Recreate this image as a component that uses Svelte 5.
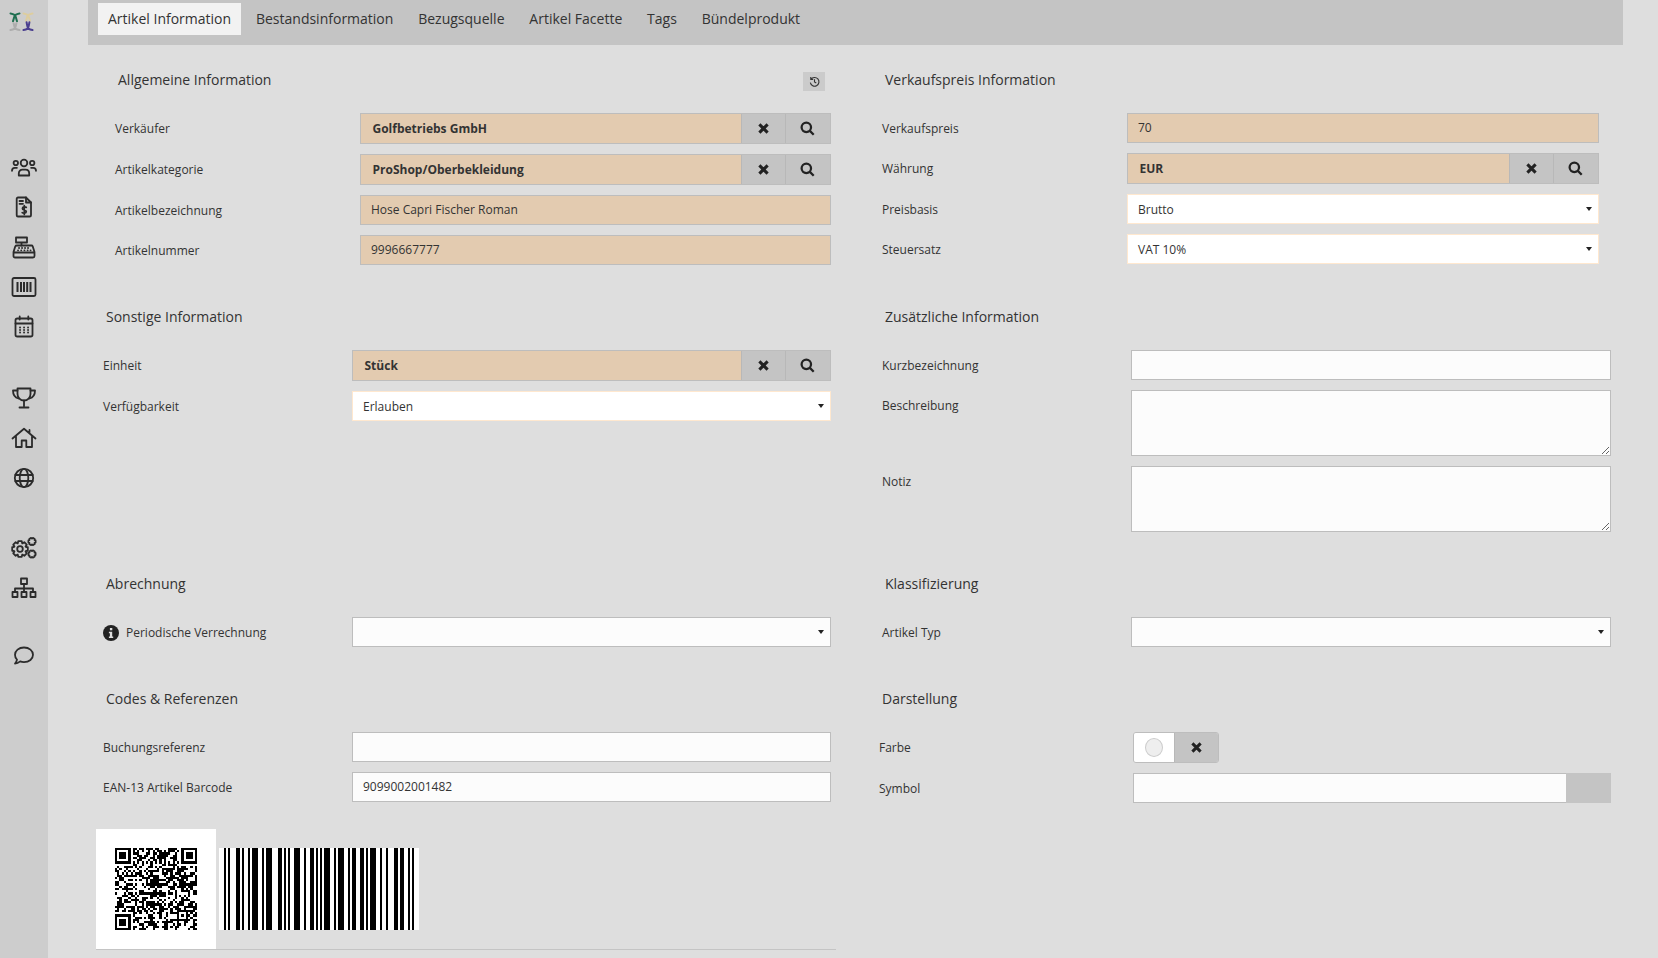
<script>
  const tabs = ['Artikel Information', 'Bestandsinformation', 'Bezugsquelle', 'Artikel Facette', 'Tags', 'Bündelprodukt'];

  // EAN-13 bars for the article barcode
  const L = ['0001101', '0011001', '0010011', '0111101', '0100011', '0110001', '0101111', '0111011', '0110111', '0001011'];
  const PARITY = ['LLLLLL', 'LLGLGG', 'LLGGLG', 'LLGGGL', 'LGLLGG', 'LGGLLG', 'LGGGLL', 'LGLGLG', 'LGLGGL', 'LGGLGL'];
  const invert = (s) => s.replace(/./g, (c) => (c === '0' ? '1' : '0'));

  function ean13(code) {
    const d = code.split('').map(Number);
    let out = '101';
    for (let i = 1; i < 7; i++) {
      const r = invert(L[d[i]]);
      out += PARITY[d[0]][i - 1] === 'L' ? L[d[i]] : r.split('').reverse().join('');
    }
    out += '01010';
    for (let i = 7; i < 13; i++) out += invert(L[d[i]]);
    return out + '101';
  }
  const bars = ean13('9099002001482').split('');

  // QR matrix: fixed patterns, the data area is filled from a small generator
  const SIZE = 37;
  function buildQr() {
    let seed = 90990020;
    const next = () => {
      seed = (seed * 1664525 + 1013904223) % 4294967296;
      return seed / 4294967296;
    };
    const cells = [];
    const finder = (x, y) => {
      if (x < 0 || y < 0 || x > 6 || y > 6) return false;
      return x === 0 || y === 0 || x === 6 || y === 6 || (x > 1 && x < 5 && y > 1 && y < 5);
    };
    for (let y = 0; y < SIZE; y++) {
      for (let x = 0; x < SIZE; x++) {
        let on;
        const tl = x < 8 && y < 8;
        const tr = x >= SIZE - 8 && y < 8;
        const bl = x < 8 && y >= SIZE - 8;
        if (tl) on = finder(x, y);
        else if (tr) on = finder(x - SIZE + 7, y);
        else if (bl) on = finder(x, y - SIZE + 7);
        else if (x === 6) on = y % 2 === 0;
        else if (y === 6) on = x % 2 === 0;
        else if (x >= 28 && x <= 32 && y >= 28 && y <= 32) {
          on = x === 28 || x === 32 || y === 28 || y === 32 || (x === 30 && y === 30);
        } else on = next() > 0.5;
        if (on) cells.push([x, y]);
      }
    }
    return cells;
  }
  const qr = buildQr();

  function gear(cx, cy, r, teeth) {
    let d = '';
    const step = (Math.PI * 2) / teeth;
    for (let i = 0; i < teeth; i++) {
      const a = i * step - step / 2;
      const pts = [
        [r * 0.76, a + step * 0.02],
        [r, a + step * 0.22],
        [r, a + step * 0.78],
        [r * 0.76, a + step * 0.98]
      ];
      pts.forEach(([rad, ang], j) => {
        const x = (cx + rad * Math.cos(ang)).toFixed(2);
        const y = (cy + rad * Math.sin(ang)).toFixed(2);
        d += (i === 0 && j === 0 ? 'M' : 'L') + x + ' ' + y;
      });
    }
    return d + 'Z';
  }
</script>

{#snippet times()}
  <svg class="glyph" viewBox="0 0 12 12"><path d="M2.200 2.200l7.600 7.600M9.800 2.200l-7.600 7.600" /></svg>
{/snippet}

{#snippet lookup(text)}
  <div class="lookup">
    <span class="value">{text}</span>
    <button type="button" class="addon">{@render times()}</button>
    <button type="button" class="addon search">
      <svg class="glyph thin" viewBox="0 0 14 14"><circle cx="5.900" cy="5.900" r="4.400" /><path d="M9.200 9.200l3.600 3.600" /></svg>
    </button>
  </div>
{/snippet}

{#snippet picker(text)}
  <div class="select" class:plain={!text}><span>{text}</span></div>
{/snippet}

<div class="shell">
  <aside class="sidebar">
    <svg class="logo" viewBox="0 0 26 20" fill="none" stroke-width="2" stroke-linecap="round">
      <g stroke="#1f6f50"><path d="M1 1.500c2 .3 3.400 1 4.500 1.700c1.100-.7 2.500-1.400 4.500-1.700M5.500 3.200c-1 2-1.500 4-2 6M5.500 3.200c1 2 1.500 4 2 6" /></g>
      <g stroke="#adadad"><path d="M1 18c2-.3 3.400-1 4.500-1.700c1.100.7 2.500 1.400 4.500 1.700M5.500 16.300c-.6-1.500-1-3-1.400-5M5.500 16.300c.6-1.500 1-3 1.400-5" /></g>
      <g stroke="#ddcd9e"><path d="M14 1.500c2 .3 3.400 1 4.500 1.700c1.100-.7 2.500-1.400 4.500-1.700M18.500 3.200c-1 2-1.500 3.500-2 5.500M18.500 3.200c1 2 1.500 3.500 2 5.500" /></g>
      <g stroke="#4b3f8f"><path d="M14 18c2-.3 3.400-1 4.500-1.700c1.100.7 2.500 1.400 4.500 1.700M18.500 16.300c-.6-1.500-1-3.500-1.400-6M18.500 16.300c.6-1.500 1-3.500 1.400-6" /></g>
    </svg>

    <nav class="group first">
      <span class="icon">
        <svg viewBox="0 0 26 24">
          <circle cx="13" cy="8" r="3.300" /><circle cx="4.800" cy="8" r="2.200" /><circle cx="21.200" cy="8" r="2.200" />
          <path d="M7.800 20.500v-2c0-2.400 1.700-3.800 3.600-3.800h3.200c1.900 0 3.600 1.400 3.600 3.800v2z" />
          <path d="M1 15.800c0-1.800 1.200-3 2.700-3h2.200M25 15.800c0-1.800-1.200-3-2.700-3h-2.200" />
        </svg>
      </span>
      <span class="icon">
        <svg viewBox="0 0 26 24">
          <path d="M7 2.500h8l5 5v12.700a1.300 1.300 0 0 1-1.300 1.300H7a1.300 1.300 0 0 1-1.300-1.300V3.800A1.300 1.300 0 0 1 7 2.500z" />
          <path d="M15 2.500v5h5M8.500 6h3.500M8.500 8.800h3.500" />
          <path class="fine" d="M15.300 12.300c-.6-.6-3.900-.9-3.900 1.100c0 2 3.900 1.200 3.900 3.200c0 2-3.400 1.700-4.100 1M13.300 10.500v9" />
        </svg>
      </span>
      <span class="icon">
        <svg viewBox="0 0 26 24">
          <path d="M5 2.500h11v5H5zM10.500 7.500v3" />
          <path d="M6 10.500h14.500c.6 0 1 .3 1.200.8l1.800 5.700v4a1.500 1.500 0 0 1-1.500 1.500h-18a1.500 1.500 0 0 1-1.500-1.500v-4l1.800-5.700c.2-.5.700-.8 1.700-.8zM3 17.500h20" />
          <path class="dots" d="M8 13h.1M11 13h.1M14 13h.1M17 13h.1M7 15.300h.1M10.200 15.300h.1M13.400 15.300h.1M16.600 15.300h.1M19.500 15.300h.1" />
        </svg>
      </span>
      <span class="icon">
        <svg viewBox="0 0 26 24">
          <rect x="1.500" y="3" width="23" height="18" rx="1.500" />
          <path class="heavy" d="M6.500 7v10M10 7v10M13 7v10M16.200 7v10M19.500 7v10" />
        </svg>
      </span>
      <span class="icon">
        <svg viewBox="0 0 26 24">
          <rect x="4.500" y="3.500" width="17" height="18" rx="1.800" />
          <path d="M4.500 8.500h17M8.700 1.500v3M17.300 1.500v3" />
          <path class="dots" d="M9 12.500h.1M13 12.500h.1M17 12.500h.1M9 15h.1M13 15h.1M17 15h.1M9 17.500h.1M13 17.500h.1M17 17.500h.1" />
        </svg>
      </span>
    </nav>

    <nav class="group second">
      <span class="icon">
        <svg viewBox="0 0 26 24">
          <path d="M6.500 2.500h13v5.500c0 3.500-2.800 6.500-6.500 6.500s-6.500-3-6.500-6.500z" />
          <path d="M6.500 4.500H2c0 4 1.500 7 5.500 8M19.500 4.500H24c0 4-1.500 7-5.500 8M13 14.500v5.500M8.500 21.500h9" />
        </svg>
      </span>
      <span class="icon">
        <svg viewBox="0 0 26 24">
          <path d="M1.500 12.500L13 2.800l11.500 9.700M5 10v11h5.700v-6.500h4.600V21H21V10M18.500 4v2.500" />
        </svg>
      </span>
      <span class="icon">
        <svg viewBox="0 0 26 24">
          <circle cx="13" cy="12" r="9.200" /><ellipse cx="13" cy="12" rx="4.300" ry="9.200" />
          <path d="M4.300 9h17.400M4.300 15h17.400" />
        </svg>
      </span>
    </nav>

    <nav class="group">
      <span class="icon">
        <svg viewBox="0 0 26 24">
          <path d={gear(9, 13, 8, 8)} /><circle cx="9" cy="13" r="2.800" />
          <path class="fine" d={gear(21, 5.5, 3.8, 6)} />
          <path class="fine" d={gear(21, 18, 3.8, 6)} />
        </svg>
      </span>
      <span class="icon">
        <svg viewBox="0 0 26 24">
          <rect x="10" y="2.500" width="6" height="5.500" /><rect x="1.500" y="16" width="5" height="5" /><rect x="10.500" y="16" width="5" height="5" /><rect x="19.500" y="16" width="5" height="5" />
          <path d="M13 8v8M4 16v-3.500h18V16" />
        </svg>
      </span>
    </nav>

    <nav class="group last">
      <span class="icon">
        <svg viewBox="0 0 26 24">
          <path d="M13 3.500c5.200 0 9 3.200 9 7.300s-3.800 7.300-9 7.300c-1.400 0-2.700-.2-3.800-.7c-1.200 1-3 2.200-5.200 2.200c1.100-1.100 1.800-2.600 2-3.900C4.800 14.600 4 12.800 4 10.800C4 6.700 7.800 3.500 13 3.500z" />
        </svg>
      </span>
    </nav>
  </aside>

  <main class="content">
    <div class="tabs">
      {#each tabs as tab, i}
        <button type="button" class="tab" class:active={i === 0}>{tab}</button>
      {/each}
    </div>

    <div class="columns top">
      <section class="block a">
        <div class="heading">
          <h3>Allgemeine Information</h3>
          <button type="button" class="history" aria-label="Verlauf">
            <svg viewBox="0 0 14 14"><path d="M3 2.200v2.600h2.600M3.200 4.700a4.700 4.700 0 1 1-.7 3.600M7 4.500v3l1.900 1" /></svg>
          </button>
        </div>
        <div class="row tall"><label>Verkäufer</label>{@render lookup('Golfbetriebs GmbH')}</div>
        <div class="row tall"><label>Artikelkategorie</label>{@render lookup('ProShop/Oberbekleidung')}</div>
        <div class="row"><label>Artikelbezeichnung</label><input class="req" readonly value="Hose Capri Fischer Roman" /></div>
        <div class="row"><label>Artikelnummer</label><input class="req" readonly value="9996667777" /></div>
      </section>
      <section class="block b">
        <div class="heading"><h3>Verkaufspreis Information</h3></div>
        <div class="row"><label>Verkaufspreis</label><input class="req" readonly value="70" /></div>
        <div class="row tall"><label>Währung</label>{@render lookup('EUR')}</div>
        <div class="row"><label>Preisbasis</label>{@render picker('Brutto')}</div>
        <div class="row"><label>Steuersatz</label>{@render picker('VAT 10%')}</div>
      </section>
    </div>

    <div class="columns">
      <section class="block c">
        <div class="heading"><h3>Sonstige Information</h3></div>
        <div class="row tall"><label>Einheit</label>{@render lookup('Stück')}</div>
        <div class="row"><label>Verfügbarkeit</label>{@render picker('Erlauben')}</div>
      </section>
      <section class="block d">
        <div class="heading"><h3>Zusätzliche Information</h3></div>
        <div class="row"><label>Kurzbezeichnung</label><input readonly /></div>
        <div class="row area"><label>Beschreibung</label><textarea readonly></textarea></div>
        <div class="row area"><label>Notiz</label><textarea readonly></textarea></div>
      </section>
    </div>

    <div class="columns">
      <section class="block c">
        <div class="heading"><h3>Abrechnung</h3></div>
        <div class="row">
          <label class="with-info">
            <svg class="info" viewBox="0 0 16 16"><circle cx="8" cy="8" r="8" /><rect x="6.900" y="3" width="2.400" height="2.300" /><path d="M5.900 6.700h3.300v4.900h1v1.500H5.900v-1.500h1V8.200h-1z" /></svg>
            Periodische Verrechnung
          </label>
          {@render picker('')}
        </div>
      </section>
      <section class="block d">
        <div class="heading"><h3>Klassifizierung</h3></div>
        <div class="row"><label>Artikel Typ</label>{@render picker('')}</div>
      </section>
    </div>

    <div class="columns">
      <section class="block c">
        <div class="heading"><h3>Codes &amp; Referenzen</h3></div>
        <div class="row"><label>Buchungsreferenz</label><input readonly /></div>
        <div class="row"><label>EAN-13 Artikel Barcode</label><input readonly value="9099002001482" /></div>
      </section>
      <section class="block e">
        <div class="heading"><h3>Darstellung</h3></div>
        <div class="row tall">
          <label>Farbe</label>
          <div class="color">
            <span class="swatch"><i></i></span>
            <button type="button" class="addon">{@render times()}</button>
          </div>
        </div>
        <div class="row">
          <label>Symbol</label>
          <div class="symbol"><input readonly /><span class="addon"></span></div>
        </div>
      </section>
    </div>

    <div class="codes">
      <div class="qr">
        <svg viewBox="0 0 {SIZE} {SIZE}" shape-rendering="crispEdges">
          {#each qr as [x, y]}
            <rect {x} {y} width="1" height="1" />
          {/each}
        </svg>
      </div>
      <svg class="barcode" viewBox="0 0 100 41" preserveAspectRatio="none" shape-rendering="crispEdges">
        <rect width="100" height="41" fill="#fff" />
        {#each bars as bit, i}
          {#if bit === '1'}<rect x={i + 2.5} y="0" width="1" height="41" />{/if}
        {/each}
      </svg>
    </div>
  </main>
</div>

<style>
  :global(body) {
    margin: 0;
    background: #dedede;
    overflow: hidden;
  }

  .shell {
    display: flex;
    height: 958px;
    overflow: hidden;
    font-family: "Open Sans", "Liberation Sans", sans-serif;
    font-size: 12px;
    color: #333;
  }

  .sidebar {
    flex: 0 0 48px;
    box-sizing: border-box;
    padding-right: 1px;
    background: #cdcdcd;
    display: flex;
    flex-direction: column;
    align-items: center;
  }
  .logo {
    width: 27px;
    height: 20px;
    margin: 12px 2px 0 0;
    flex: none;
  }
  .group {
    display: flex;
    flex-direction: column;
    margin-top: 30px;
  }
  .group.first {
    margin-top: 115px;
  }
  .group.second {
    margin-top: 31px;
  }
  .group.last {
    margin-top: 28px;
  }
  .icon {
    height: 40px;
    display: flex;
    align-items: center;
    justify-content: center;
  }
  .icon svg {
    width: 26px;
    height: 24px;
    fill: none;
    stroke: #2b2b2b;
    stroke-width: 1.8;
    stroke-linejoin: round;
    stroke-linecap: round;
  }
  .icon .fine {
    stroke-width: 1.7;
  }
  .icon .heavy {
    stroke-width: 2;
    stroke-linecap: butt;
  }
  .icon .dots {
    stroke-width: 1.8;
  }

  .content {
    flex: 1;
    padding: 0 35px 0 40px;
    min-width: 0;
  }

  .tabs {
    height: 45px;
    box-sizing: border-box;
    background: #c4c4c4;
    padding: 3px 0 0 10px;
    display: flex;
    align-items: flex-start;
    gap: 4.85px;
  }
  .tab {
    height: 32px;
    padding: 0 10px 2px;
    border: 0;
    background: none;
    font: inherit;
    font-size: 14px;
    color: #333;
  }
  .tab.active {
    background: #f2f2f2;
  }

  .columns {
    display: grid;
    grid-template-columns: 762px 1fr;
    margin-top: 42px;
  }
  .columns.top {
    margin-top: 25px;
  }

  .block {
    --label: 245px;
    display: flex;
    flex-direction: column;
    gap: 10px;
    min-width: 0;
  }
  .block.a {
    padding: 0 19px 0 27px;
  }
  .block.b {
    padding: 0 24px 0 32px;
  }
  .block.c {
    --label: 249px;
    padding: 0 19px 0 15px;
  }
  .block.d {
    --label: 249px;
    padding: 0 12px 0 32px;
  }
  .block.e {
    --label: 254px;
    padding: 0 12px 0 29px;
  }

  .heading {
    height: 20px;
    margin: 0 0 13px 3px;
    display: flex;
    justify-content: space-between;
    align-items: flex-start;
  }
  h3 {
    margin: 0;
    font-size: 14px;
    line-height: 20px;
    font-weight: 400;
    color: #333;
  }
  .history {
    width: 22px;
    height: 19px;
    margin: 2px 6px 0 0;
    padding: 0;
    border: 0;
    background: #cbcbcb;
    display: flex;
    align-items: center;
    justify-content: center;
  }
  .history svg {
    width: 13px;
    height: 13px;
    fill: none;
    stroke: #333;
    stroke-width: 1.2;
  }

  .row {
    display: grid;
    grid-template-columns: var(--label) 1fr;
    align-items: center;
    height: 30px;
  }
  .row.tall {
    height: 31px;
  }
  .row.area {
    height: 66px;
    align-items: start;
  }
  label {
    padding-top: 2px;
    font-size: 12px;
    line-height: 18px;
    color: #333;
  }
  .row.tall label {
    padding-top: 0;
  }
  .row.area label {
    padding-top: 7px;
  }
  .with-info {
    display: flex;
    align-items: center;
    gap: 7px;
  }
  .info {
    width: 16px;
    height: 16px;
    fill: #222;
    flex: none;
  }
  .info rect,
  .info path {
    fill: #dedede;
  }

  input,
  textarea {
    box-sizing: border-box;
    width: 100%;
    height: 30px;
    border: 1px solid #bdbdbd;
    border-radius: 0;
    background: #fcfcfc;
    padding: 0 10px 2px;
    margin: 0;
    font: inherit;
    font-size: 12px;
    color: #333;
    outline: none;
  }
  textarea {
    height: 66px;
    display: block;
    resize: vertical;
  }
  input.req {
    background: #e3cbb0;
  }

  .lookup {
    display: flex;
    height: 31px;
    box-sizing: border-box;
    border: 1px solid #bdbdbd;
    background: #e3cbb0;
  }
  .value {
    flex: 1;
    padding-left: 11.5px;
    font-weight: 700;
    line-height: 30px;
  }
  .addon {
    width: 44px;
    flex: none;
    padding: 0;
    border: 0;
    border-left: 1px solid #b8b8b8;
    background: #c4c4c4;
    display: flex;
    align-items: center;
    justify-content: center;
  }
  .addon.search {
    width: 45px;
    padding-right: 1px;
  }
  .glyph {
    width: 13px;
    height: 13px;
    fill: none;
    stroke: #222;
    stroke-width: 2.8;
  }
  .glyph.thin {
    width: 15px;
    height: 15px;
    stroke-width: 2.1;
  }

  .select {
    position: relative;
    box-sizing: border-box;
    height: 30px;
    border: 1px solid #ffe8cf;
    background: #fff;
    padding-left: 10px;
    line-height: 30px;
  }
  .select.plain {
    border-color: #bdbdbd;
    background: #fcfcfc;
  }
  .select::after {
    content: "";
    position: absolute;
    right: 6px;
    top: 12px;
    border: 3px solid transparent;
    border-top: 4px solid #222;
    border-bottom: 0;
  }

  .color {
    display: flex;
    width: 86px;
    height: 31px;
    box-sizing: border-box;
    border: 1px solid #bdbdbd;
    border-radius: 3px;
    overflow: hidden;
  }
  .swatch {
    width: 40px;
    background: #fff;
    display: flex;
    align-items: center;
    justify-content: center;
  }
  .swatch i {
    width: 18px;
    height: 19px;
    box-sizing: border-box;
    border: 1px solid #ccc;
    border-radius: 50%;
    background: #eee;
  }
  .color .addon {
    flex: 1;
  }

  .symbol {
    display: flex;
    height: 30px;
  }
  .symbol input {
    flex: 1;
    min-width: 0;
    border-right: 0;
  }
  .symbol .addon {
    width: 45px;
    border: 0;
  }

  .codes {
    width: 740px;
    margin: 26px 0 0 8px;
    display: flex;
    align-items: flex-start;
    gap: 3px;
    height: 120px;
    border-bottom: 1px solid #c4c4c4;
  }
  .qr {
    width: 120px;
    height: 120px;
    box-sizing: border-box;
    padding: 19px;
    background: #fff;
  }
  .qr svg {
    display: block;
    width: 82px;
    height: 82px;
  }
  .barcode {
    display: block;
    width: 200px;
    height: 82px;
    margin-top: 19px;
  }
</style>
